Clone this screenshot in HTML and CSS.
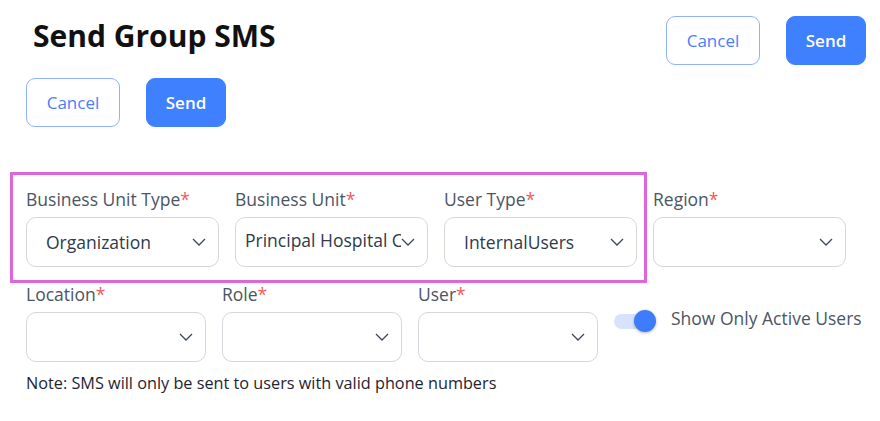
FILE: index.html
```html
<!DOCTYPE html>
<html lang="en">
<head>
<meta charset="utf-8">
<title>Send Group SMS</title>
<link rel="stylesheet" href="styles.css">
</head>
<body>
<div class="page">
  <header class="top">
    <h1 class="title">Send Group SMS</h1>
    <div class="actions">
      <button class="btn btn-outline" type="button">Cancel</button>
      <button class="btn btn-primary btn-send" type="button">Send</button>
    </div>
  </header>
  <div class="actions actions-second">
    <button class="btn btn-outline" type="button">Cancel</button>
    <button class="btn btn-primary btn-send" type="button">Send</button>
  </div>

  <form class="form">
    <div class="highlight"></div>
    <div class="row row-first">
      <div class="field">
        <label class="label">Business Unit Type<span class="req">*</span></label>
        <div class="select"><span class="value">Organization</span><svg class="chev" viewBox="0 0 14 8" width="14" height="8"><path d="M1 1 L7 7 L13 1"/></svg></div>
      </div>
      <div class="field">
        <label class="label">Business Unit<span class="req">*</span></label>
        <div class="select select-tight"><span class="value value-clip">Principal Hospital Corporation</span><svg class="chev" viewBox="0 0 14 8" width="14" height="8"><path d="M1 1 L7 7 L13 1"/></svg></div>
      </div>
      <div class="field">
        <label class="label">User Type<span class="req">*</span></label>
        <div class="select"><span class="value">InternalUsers</span><svg class="chev" viewBox="0 0 14 8" width="14" height="8"><path d="M1 1 L7 7 L13 1"/></svg></div>
      </div>
      <div class="field">
        <label class="label">Region<span class="req">*</span></label>
        <div class="select"><span class="value"></span><svg class="chev" viewBox="0 0 14 8" width="14" height="8"><path d="M1 1 L7 7 L13 1"/></svg></div>
      </div>
    </div>

    <div class="row row-second">
      <div class="field">
        <label class="label">Location<span class="req">*</span></label>
        <div class="select"><span class="value"></span><svg class="chev" viewBox="0 0 14 8" width="14" height="8"><path d="M1 1 L7 7 L13 1"/></svg></div>
      </div>
      <div class="field">
        <label class="label">Role<span class="req">*</span></label>
        <div class="select"><span class="value"></span><svg class="chev" viewBox="0 0 14 8" width="14" height="8"><path d="M1 1 L7 7 L13 1"/></svg></div>
      </div>
      <div class="field">
        <label class="label">User<span class="req">*</span></label>
        <div class="select"><span class="value"></span><svg class="chev" viewBox="0 0 14 8" width="14" height="8"><path d="M1 1 L7 7 L13 1"/></svg></div>
      </div>
      <div class="toggle-group">
        <span class="toggle"><span class="track"></span><span class="thumb"></span></span>
        <span class="toggle-text">Show Only Active Users</span>
      </div>
    </div>

    <p class="note">Note: SMS will only be sent to users with valid phone numbers</p>
  </form>
</div>
</body>
</html>
```

FILE: styles.css
```css
* { box-sizing: border-box; }
html, body { margin: 0; padding: 0; background: #ffffff; }
body {
  font-family: "Open Sans", "Noto Sans", "Liberation Sans", sans-serif;
  color: #333;
}
.page { width: 880px; }

.top {
  display: flex;
  justify-content: space-between;
  align-items: flex-start;
  padding: 16px 14px 0 33px;
}
.title {
  margin: 0;
  font-size: 30px;
  line-height: 40px;
  font-weight: 700;
  color: #111;
}
.actions { display: flex; gap: 26px; }
.actions-second { padding-left: 26px; margin-top: 13px; }

.btn {
  font-family: inherit;
  font-size: 17px;
  height: 49px;
  width: 94px;
  border-radius: 9px;
  cursor: pointer;
  padding: 0;
}
.btn-outline {
  background: #fff;
  border: 1px solid #8fb2ff;
  color: #4a7cff;
}
.btn-primary {
  background: #3f80ff;
  border: 1px solid #3f80ff;
  color: #fff;
  font-weight: 600;
}
.btn-send { width: 80px; }

.form {
  position: relative;
  margin: 61px 0 0 0;
  padding-left: 26px;
}
.highlight {
  position: absolute;
  left: 10px;
  top: -16px;
  width: 637px;
  height: 111px;
  border: 3px solid #dd66dd;
  pointer-events: none;
}
.row { display: flex; gap: 16px; }
.row-first .field { width: 193px; }
.row-second { margin-top: 16px; }
.row-second .field { width: 180px; }

.label {
  display: block;
  font-size: 17.5px;
  line-height: 23px;
  color: #4b5563;
  margin-bottom: 6px;
  white-space: nowrap;
}
.req { color: #f25c5c; }

.select {
  height: 50px;
  border: 1px solid #d4d7dc;
  border-radius: 10px;
  display: flex;
  align-items: center;
  padding: 0 12px 0 19px;
  background: #fff;
}
.select-tight { padding-left: 9px; }
.value {
  flex: 1;
  min-width: 0;
  font-size: 17.5px;
  color: #2f3a4a;
  white-space: nowrap;
  overflow: hidden;
}
.select-tight .value { margin-top: -4px; }
.chev {
  flex: none;
  fill: none;
  stroke: #3b4658;
  stroke-width: 1.3;
}

.toggle-group {
  display: flex;
  align-items: center;
  gap: 15px;
  margin-top: 27px;
  height: 24px;
}
.toggle {
  position: relative;
  width: 42px;
  height: 24px;
  display: block;
}
.track {
  position: absolute;
  left: 0;
  top: 4px;
  width: 28px;
  height: 15px;
  border-radius: 8px;
  background: #d7e3fd;
}
.thumb {
  position: absolute;
  left: 20px;
  top: 0;
  width: 22px;
  height: 22px;
  border-radius: 50%;
  background: #3d7dfd;
  box-shadow: 0 1px 3px rgba(0, 0, 0, 0.3);
}
.toggle-text {
  font-size: 17.5px;
  color: #4b5563;
  white-space: nowrap;
  margin-bottom: 8px;
}

.note {
  margin: 10px 0 0 0;
  font-size: 16.25px;
  line-height: 22px;
  color: #1f2430;
}
```
